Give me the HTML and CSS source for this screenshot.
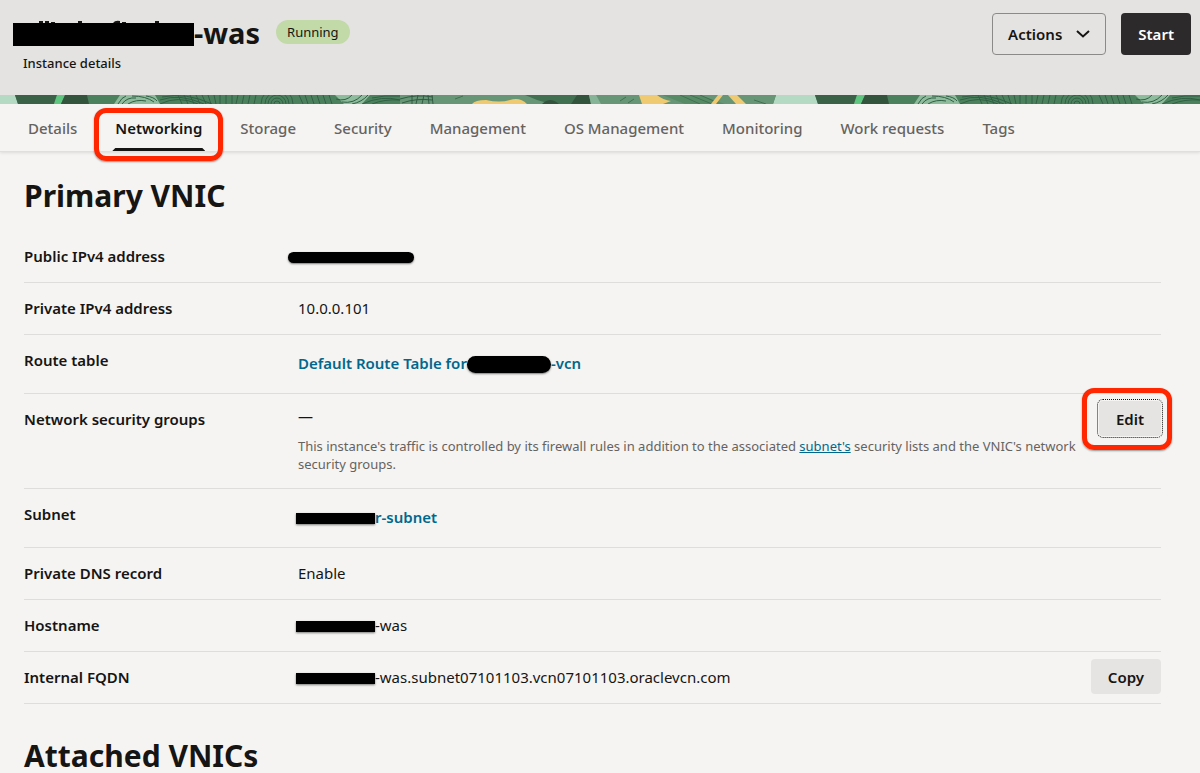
FILE: index.html
```
<!DOCTYPE html>
<html lang="en">
<head>
    <meta charset="UTF-8">
    <meta name="viewport" content="width=device-width, initial-scale=1.0">
    <title>Instance details</title>
    <link rel="stylesheet" href="styles.css">
</head>
<body>
    <header class="page-header">
        <div class="header-text">
            <div class="title-row">
                <h1 class="title">
                    <svg class="title-mask" width="181" height="28" viewBox="0 0 181 28" aria-hidden="true">
                        <path d="M26 2h4v4h-4zM32 2h4v4h-4zM38 3h4v4h-4zM65 2h4v4h-4zM100 4q2-3 7-2v4h-7zM109 3h4v4h-4zM142 2h4v4h-4z" fill="#161513"/>
                        <rect y="4" width="181" height="23" fill="#000"/>
                    </svg>-was</h1>
                <span class="badge">Running</span>
            </div>
            <p class="subtitle">Instance details</p>
        </div>
        <div class="header-actions">
            <button type="button" class="btn btn-outline">Actions
                <svg width="14" height="8" viewBox="0 0 14 8" aria-hidden="true"><path d="M1 1l6 5.500 6-5.500" fill="none" stroke="#161513" stroke-width="2"/></svg>
            </button>
            <button type="button" class="btn btn-dark">Start</button>
        </div>
    </header>

    <svg class="strip" width="100%" height="9" aria-hidden="true">
        <defs>
            <pattern id="leaves" width="800" height="9" patternUnits="userSpaceOnUse">
                <rect width="800" height="9" fill="#4b815c"/>
                <path d="M0 0h15l3 9H0zM776 0h24v9h-27z" fill="#b5dac4"/>
                <path d="M15 0h42l-3 9H18z" fill="#3a6246"/>
                <path d="M57 0h8l-4 9h-7z" fill="#5fc67f"/>
                <path d="M65 0h22l2 9H61z" fill="#32543d"/>
                <path d="M120 0h35l5 9h-46zM335 0h35l-8 9h-18z" fill="#8dbb9b"/>
                <g fill="none" stroke="#2f6043" stroke-width="1">
                    <path d="M118 9q4-7 8-8M122 9q5-7 14-6M128 9q8-5 18-3M132 1q14 0 22 6M146 1q8 1 11 5"/>
                    <path d="M160 9q18-9 38 0M160 5q20-7 44 4M162 2q24-5 50 7M178 0l4 9M184 0l4 9M190 0l4 9M196 0l4 9M202 0l4 9M208 0l3 9M214 0l2 9M220 0v9M226 0v9M232 0v9M238 0l-2 9M244 0l-2 9M250 0l-2 9M256 0l-2 9"/>
                    <circle cx="277" cy="9" r="3"/><circle cx="277" cy="9" r="6"/><circle cx="277" cy="9" r="9"/><circle cx="277" cy="9" r="12"/><circle cx="277" cy="9" r="16"/>
                    <path d="M299 0l4 9M305 0l3 9M311 0l3 9M317 0l3 9M323 0l3 9M329 0l3 9"/>
                    <path d="M336 4q10 3 16-4M342 7q12 2 20-7M352 9q10-2 16-9M362 9q20-9 38-4M372 9q12-5 28-4M372 3q12-3 28-2"/>
                </g>
                <path d="M400 0h376l-3 9H400z" fill="#679676"/>
                <path d="M400 4q16-5 33-2M402 8q14-5 30-3M412 0v9M418 0l-2 9M424 0l-2 9M432 0l1 9M428 0l1 9" fill="none" stroke="#2f5b40" stroke-width="1"/>
                <path d="M525 0h64l-8 9h-30l-14-4z" fill="#40704f"/>
                <path d="M542 9q8-8 17 0zM577 0h12l2 9h-20z" fill="#32543d"/>
                <path d="M589 0h7l5 9h-10z" fill="#86b496"/>
                <path d="M472 9q3-4 14-4 14 3 24 0 10-3 17 4z" fill="#efca70"/>
                <path d="M662 0h38l25 9h-40z" fill="#568b65"/>
                <path d="M680 0l20 9M690 0l22 9M700 0l16 7M754 5l12 4M620 6l6-4M628 8l6-4M455 4l8-3" stroke="#40704f" stroke-width="1"/>
                <path d="M639 0h18q6 5 14 6l-8 3h-21zM718 0h5l-7 9h-5zM728 0h9l9 9h-10z" fill="#efca70"/>
            </pattern>
        </defs>
        <rect width="100%" height="9" fill="url(#leaves)"/>
    </svg>

    <nav class="tabs">
        <a class="tab" href="#details">Details</a>
        <a class="tab active marked" href="#networking" aria-current="page">Networking</a>
        <a class="tab" href="#storage">Storage</a>
        <a class="tab" href="#security">Security</a>
        <a class="tab" href="#management">Management</a>
        <a class="tab" href="#os-management">OS Management</a>
        <a class="tab" href="#monitoring">Monitoring</a>
        <a class="tab" href="#work-requests">Work requests</a>
        <a class="tab" href="#tags">Tags</a>
    </nav>

    <main class="content">
        <h2 class="section-title">Primary VNIC</h2>
        <dl class="details">
            <div class="row">
                <dt>Public IPv4 address</dt>
                <dd><span class="mask mask-ip"></span></dd>
            </div>
            <div class="row">
                <dt>Private IPv4 address</dt>
                <dd>10.0.0.101</dd>
            </div>
            <div class="row row-link">
                <dt>Route table</dt>
                <dd><a class="link" href="#route-table">Default Route Table for<span class="mask mask-vcn"></span>-vcn</a></dd>
            </div>
            <div class="row row-help">
                <dt>Network security groups</dt>
                <dd>
                    <div class="empty">—</div>
                    <p class="help">This instance's traffic is controlled by its firewall rules in addition to the associated <a href="#subnet">subnet's</a> security lists and the VNIC's network security groups.</p>
                </dd>
                <dd class="row-action marked"><button type="button" class="btn btn-small btn-focus">Edit</button></dd>
            </div>
            <div class="row row-link">
                <dt>Subnet</dt>
                <dd><a class="link" href="#subnet"><span class="mask mask-name"></span>r-subnet</a></dd>
            </div>
            <div class="row">
                <dt>Private DNS record</dt>
                <dd>Enable</dd>
            </div>
            <div class="row">
                <dt>Hostname</dt>
                <dd><span class="mask mask-name"></span>-was</dd>
            </div>
            <div class="row">
                <dt>Internal FQDN</dt>
                <dd><span class="mask mask-name"></span>-was.subnet07101103.vcn07101103.oraclevcn.com</dd>
                <dd class="row-action"><button type="button" class="btn btn-small">Copy</button></dd>
            </div>
        </dl>
        <h2 class="section-title">Attached VNICs</h2>
    </main>
</body>
</html>
```
FILE: styles.css
```
* {
    box-sizing: border-box;
}
html {
    overflow: hidden;
}
body {
    margin: 0;
    font-family: "Noto Sans", "Open Sans", sans-serif;
    font-size: 15px;
    line-height: 20px;
    color: #161513;
    background-color: #f5f4f2;
}
h1, h2, p, dl, dd {
    margin: 0;
}

/* header */
.page-header {
    display: flex;
    justify-content: space-between;
    align-items: flex-start;
    height: 95px;
    padding: 13px 9px 0 13px;
    background-color: #e4e3e1;
}
.title-row {
    display: flex;
    align-items: flex-start;
    gap: 16px;
}
.title {
    display: flex;
    align-items: center;
    font-size: 29px;
    line-height: 40px;
    font-weight: 700;
}
.badge {
    margin-top: 7px;
    padding: 0 11px;
    border-radius: 12px;
    background-color: #c2d9a8;
    font-size: 13px;
    line-height: 24px;
}
.subtitle {
    margin-left: 10px;
    font-size: 13px;
    font-weight: 500;
}
.header-actions {
    display: flex;
    gap: 15px;
}

/* buttons */
.btn {
    height: 42px;
    padding: 0 17px;
    border: none;
    border-radius: 4px;
    font-family: inherit;
    font-size: 15px;
    font-weight: 600;
    color: #161513;
    cursor: pointer;
}
.btn-outline {
    display: flex;
    align-items: center;
    gap: 14px;
    padding: 0 15px;
    border: 1px solid #8b8a88;
    background-color: transparent;
}
.btn-dark {
    background-color: #2c2a2a;
    color: #fff;
}
.btn-small {
    height: 35px;
    background-color: #e5e4e2;
}
.btn-focus {
    outline: 1px dotted #161513;
    outline-offset: 1px;
}

/* tabs */
.strip {
    display: block;
}
.tabs {
    display: flex;
    height: 48px;
    padding-left: 9px;
    border-bottom: 1px solid #e0dfdd;
    box-shadow: 0 1px 3px rgba(0, 0, 0, 0.1);
}
.tab {
    position: relative;
    padding: 0 19px;
    line-height: 48px;
    font-weight: 500;
    color: #65635f;
    text-decoration: none;
    white-space: nowrap;
}
.tab.active {
    font-weight: 600;
    color: #161513;
}
.tab.active::before {
    content: "";
    position: absolute;
    left: 16px;
    right: 16px;
    bottom: 0;
    height: 3px;
    background-color: #161513;
    clip-path: polygon(3px 0, calc(100% - 3px) 0, 100% 100%, 0 100%);
}

/* red marker frames */
.marked::after {
    content: "";
    position: absolute;
    border: 5px solid #ff2600;
    border-radius: 12px;
    box-shadow: 0 1px 2px rgba(0, 0, 0, 0.4);
    pointer-events: none;
}
.tab.marked::after {
    inset: 4px -2px -10px;
}
.row-action.marked::after {
    inset: -13px -11px -14px -17px;
}

/* details */
.content {
    padding: 0 39px 0 24px;
}
.section-title {
    padding-top: 24px;
    font-size: 30px;
    line-height: 40px;
    font-weight: 700;
}
.details {
    padding: 15px 0 8px;
}
.row {
    display: grid;
    grid-template-columns: 274px 1fr auto;
    min-height: 52px;
    padding-top: 15px;
    border-bottom: 1px solid #dedddb;
}
.row dt {
    font-weight: 600;
}
.row-link {
    min-height: 59px;
}
.row-link dd {
    padding-top: 3px;
}
.row-help {
    min-height: 95px;
}
.link {
    font-weight: 600;
    color: #00688c;
    text-decoration: none;
}
.empty {
    line-height: 14px;
}
.help {
    padding-top: 14px;
    font-size: 13px;
    line-height: 18px;
    color: #65635f;
}
.help a {
    color: #00688c;
}
.row-action {
    position: relative;
    align-self: start;
    height: 35px;
    margin-top: -8px;
}
.mask {
    display: inline-block;
    vertical-align: middle;
    background-color: #000;
    box-shadow: 0 1px 2px rgba(0, 0, 0, 0.5);
}
.mask-ip {
    width: 126px;
    height: 11px;
    margin-left: -10px;
    border-radius: 6px;
}
.mask-vcn {
    width: 84px;
    height: 17px;
    border-radius: 9px;
}
.mask-name {
    width: 79px;
    height: 11px;
    margin-left: -2px;
}
```
